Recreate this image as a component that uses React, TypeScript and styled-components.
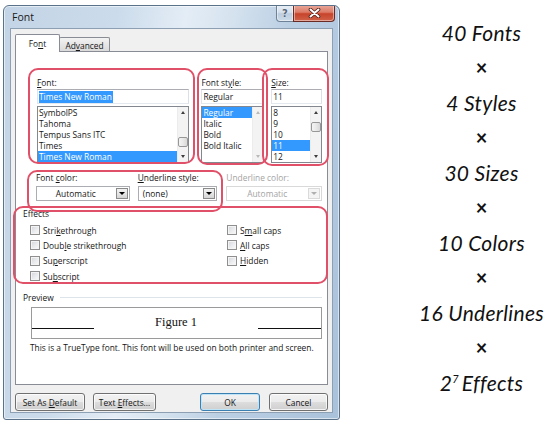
import React from "react";
import styled, { createGlobalStyle } from "styled-components";

const GlobalStyle = createGlobalStyle`
  html, body { margin: 0; padding: 0; background: #ffffff; }
  body {
    width: 549px;
    height: 429px;
    overflow: hidden;
    font-family: "Open Sans", "Noto Sans", sans-serif;
  }
  * { box-sizing: border-box; }
`;

const Page = styled.div`
  display: flex;
  align-items: flex-start;
  width: 549px;
  height: 429px;
`;

/* ---------- window frame ---------- */

const Window = styled.div`
  margin: 5px 0 0 3px;
  width: 337px;
  height: 415px;
  border: 1px solid #5b728b;
  border-radius: 6px 6px 3px 3px;
  background: linear-gradient(100deg, #c3d4e6 0%, #cbdbeb 28%, #e4edf6 45%, #d6e3ef 56%, #bcd0e4 70%, #a9c1da 100%);
  box-shadow: inset 0 0 0 1px rgba(255, 255, 255, 0.55);
  display: flex;
  flex-direction: column;
  overflow: hidden;
`;

const TitleBar = styled.div`
  height: 22px;
  display: flex;
  align-items: flex-start;
  padding: 0 4px 0 8px;
`;

const Title = styled.div`
  margin-top: 5px;
  font-size: 10.5px;
  line-height: 12px;
  color: #1a1a1a;
`;

const CaptionButtons = styled.div`
  margin-left: auto;
  margin-top: -1px;
  display: flex;
`;

const CaptionButton = styled.div<{ $variant: "help" | "close" }>`
  height: 17px;
  width: ${(p) => (p.$variant === "close" ? 42 : 18)}px;
  margin-left: ${(p) => (p.$variant === "close" ? -1 : 0)}px;
  display: flex;
  align-items: center;
  justify-content: center;
  border: 1px solid ${(p) => (p.$variant === "close" ? "#6a2b24" : "#6f8297")};
  border-top: none;
  border-radius: ${(p) => (p.$variant === "close" ? "0 0 4px 0" : "0 0 0 4px")};
  background: ${(p) =>
    p.$variant === "close"
      ? "linear-gradient(180deg, #e9a99b 0%, #dc7b68 45%, #c7432b 55%, #d0634a 100%)"
      : "linear-gradient(180deg, #e9eff6 0%, #d5e0ec 45%, #bccde0 55%, #cddbe9 100%)"};
  box-shadow: inset 0 0 0 1px rgba(255, 255, 255, 0.45);
  font-family: "DejaVu Sans", sans-serif;
  font-weight: 700;
  font-size: 10px;
  color: #56667a;
  text-shadow: 0 0 1px #ffffff;
`;

const Client = styled.div`
  flex: 1;
  margin: 0 6px 6px;
  background: #f0f0f0;
  border: 1px solid #8c9fb3;
  padding: 5px 4px 0;
  display: flex;
  flex-direction: column;
  font-size: 8.4px;
  color: #151515;
`;

/* ---------- tabs ---------- */

const TabStrip = styled.div`
  height: 17px;
  display: flex;
  align-items: flex-end;
  position: relative;
  z-index: 1;
`;

const Tab = styled.div<{ $active?: boolean; $w: number }>`
  width: ${(p) => p.$w}px;
  height: ${(p) => (p.$active ? 18 : 14)}px;
  margin-bottom: ${(p) => (p.$active ? -1 : 0)}px;
  margin-left: ${(p) => (p.$active ? 0 : -1)}px;
  border: 1px solid #898c95;
  border-bottom: none;
  border-radius: 2px 2px 0 0;
  background: ${(p) => (p.$active ? "#ffffff" : "linear-gradient(180deg, #f3f3f3 0%, #e6e6e6 50%, #dadada 100%)")};
  display: flex;
  align-items: center;
  justify-content: center;
  padding-top: ${(p) => (p.$active ? 0 : 1)}px;
`;

const U = styled.span`
  text-decoration: underline;
  text-underline-offset: 1px;
`;

const Panel = styled.div`
  position: relative;
  width: 313px;
  height: 334px;
  background: #ffffff;
  border: 1px solid #898c95;
  padding: 24px 5px 0 7px;
  display: flex;
  flex-direction: column;
`;

/* ---------- font pickers ---------- */

const PickerRow = styled.div`
  margin-left: 14px;
  display: flex;
`;

const Field = styled.div<{ $w: number; $gap?: number }>`
  width: ${(p) => p.$w}px;
  margin-left: ${(p) => p.$gap ?? 0}px;
  display: flex;
  flex-direction: column;
`;

const FieldLabel = styled.div<{ $disabled?: boolean }>`
  height: 13px;
  line-height: 13px;
  white-space: nowrap;
  color: ${(p) => (p.$disabled ? "#a3a3a3" : "#151515")};
`;

const TextBox = styled.div`
  height: 15px;
  border: 1px solid #abadb3;
  border-left-color: #e2e3ea;
  border-right-color: #dbdfe6;
  border-bottom-color: #e3e9ef;
  background: #ffffff;
  padding: 0 0 0 1px;
  display: flex;
  align-items: center;
  white-space: nowrap;
`;

const Highlight = styled.span`
  background: #3399ff;
  color: #ffffff;
  line-height: 12px;
  padding-right: 1px;
`;

const ListBox = styled.div`
  margin-top: 2px;
  height: 57px;
  border: 1px solid #828790;
  background: #ffffff;
  display: flex;
  overflow: hidden;
`;

const ListItems = styled.div`
  flex: 1;
  min-width: 0;
`;

const ListItem = styled.div<{ $selected?: boolean }>`
  height: 11px;
  line-height: 11px;
  padding-left: 1px;
  white-space: nowrap;
  background: ${(p) => (p.$selected ? "#3399ff" : "transparent")};
  color: ${(p) => (p.$selected ? "#ffffff" : "#151515")};
`;

const Scroll = styled.div`
  width: 11px;
  display: flex;
  flex-direction: column;
  background: #f3f3f3;
  border-left: 1px solid #ececec;
`;

const ScrollArrow = styled.div<{ $dir: "up" | "down"; $disabled?: boolean }>`
  height: 11px;
  display: flex;
  align-items: center;
  justify-content: center;
  &::after {
    content: "";
    border-left: 2.5px solid transparent;
    border-right: 2.5px solid transparent;
    ${(p) => (p.$dir === "up" ? "border-bottom" : "border-top")}: 3px solid
      ${(p) => (p.$disabled ? "#b9b9b9" : "#3d3d3d")};
  }
`;

const ScrollTrack = styled.div`
  flex: 1;
  display: flex;
  flex-direction: column;
  align-items: center;
`;

const Thumb = styled.div<{ $top: number }>`
  margin-top: ${(p) => p.$top}px;
  width: 10px;
  height: 10px;
  border: 1px solid #979797;
  border-radius: 2px;
  background: linear-gradient(90deg, #f4f4f4 0%, #e9e9e9 50%, #d8d8d8 100%);
`;

function VScroll({ thumb, disabled }: { thumb?: number; disabled?: boolean }) {
  return (
    <Scroll>
      <ScrollArrow $dir="up" $disabled={disabled} />
      <ScrollTrack>{thumb !== undefined && <Thumb $top={thumb} />}</ScrollTrack>
      <ScrollArrow $dir="down" $disabled={disabled} />
    </Scroll>
  );
}

/* ---------- combo boxes ---------- */

const ColorRow = styled.div`
  margin: 8px 0 0 13px;
  display: flex;
`;

const Combo = styled.div<{ $disabled?: boolean }>`
  margin-top: 2px;
  height: 15px;
  border: 1px solid ${(p) => (p.$disabled ? "#d9d9d9" : "#abadb3")};
  background: #ffffff;
  display: flex;
  align-items: stretch;
  color: ${(p) => (p.$disabled ? "#a3a3a3" : "#151515")};
`;

const ComboText = styled.div<{ $align: "left" | "center" }>`
  flex: 1;
  display: flex;
  align-items: center;
  justify-content: ${(p) => (p.$align === "center" ? "center" : "flex-start")};
  padding-left: ${(p) => (p.$align === "center" ? 0 : 4)}px;
  white-space: nowrap;
`;

const ComboArrow = styled.div<{ $disabled?: boolean }>`
  width: 12px;
  margin: 1px;
  border: 1px solid ${(p) => (p.$disabled ? "#dadada" : "#8a8a8a")};
  background: ${(p) =>
    p.$disabled ? "#f4f4f4" : "linear-gradient(180deg, #f2f2f2 0%, #e6e6e6 50%, #d4d4d4 100%)"};
  display: flex;
  align-items: center;
  justify-content: center;
  &::after {
    content: "";
    border-left: 3px solid transparent;
    border-right: 3px solid transparent;
    border-top: 3px solid ${(p) => (p.$disabled ? "#b0b0b0" : "#000000")};
  }
`;

/* ---------- effects ---------- */

const GroupLabel = styled.div<{ $top: number }>`
  margin-top: ${(p) => p.$top}px;
  height: 13px;
  line-height: 13px;
  display: flex;
  align-items: center;
`;

const GroupRule = styled.div`
  flex: 1;
  height: 1px;
  margin-left: 6px;
  background: #dde4ea;
`;

const CheckGrid = styled.div`
  margin: 2.5px 0 0 7px;
  display: grid;
  grid-template-columns: 197px 1fr;
  grid-template-rows: repeat(4, 15.33px);
  grid-auto-flow: column;
`;

const CheckItem = styled.div`
  display: flex;
  align-items: center;
  white-space: nowrap;
`;

const CheckBox = styled.div`
  width: 10px;
  height: 10px;
  margin-right: 3px;
  border: 1px solid #8f8f8f;
  background: linear-gradient(135deg, #d2d4d8 0%, #e9eaec 50%, #fbfbfb 100%);
  box-shadow: inset 0 0 0 1px #f4f4f4;
`;

/* ---------- preview ---------- */

const PreviewBox = styled.div`
  margin: 3px 0 0 8px;
  width: 291px;
  height: 32px;
  border: 1px solid #9a9a9a;
  display: flex;
  align-items: center;
`;

const PreviewLine = styled.div<{ $w: number }>`
  width: ${(p) => p.$w}px;
  height: 1px;
  margin-top: 11px;
  background: #111111;
`;

const PreviewText = styled.div`
  flex: 1;
  text-align: center;
  font-family: "Liberation Serif", "Times New Roman", serif;
  font-size: 12.5px;
  color: #111111;
`;

const Caption = styled.div`
  margin: 3px 0 0 7px;
  height: 12px;
  line-height: 12px;
  white-space: nowrap;
`;

/* ---------- buttons ---------- */

const ButtonRow = styled.div`
  margin-top: 8px;
  display: flex;
`;

const Button = styled.div<{ $w: number; $gap: number | "auto"; $default?: boolean }>`
  width: ${(p) => p.$w}px;
  height: 18px;
  margin-left: ${(p) => (p.$gap === "auto" ? "auto" : `${p.$gap}px`)};
  border: 1px solid ${(p) => (p.$default ? "#3c7fb1" : "#707070")};
  border-radius: 3px;
  background: linear-gradient(180deg, #f2f2f2 0%, #ebebeb 50%, #dddddd 51%, #cfcfcf 100%);
  box-shadow: inset 0 0 0 1px ${(p) => (p.$default ? "#bfe3f7" : "rgba(255,255,255,0.75)")};
  display: flex;
  align-items: center;
  justify-content: center;
`;

const ButtonLabel = styled.span`
  white-space: pre;
`;

/* ---------- annotations ---------- */

const Mark = styled.div<{ $x: number; $y: number; $w: number; $h: number }>`
  position: absolute;
  left: ${(p) => p.$x}px;
  top: ${(p) => p.$y}px;
  width: ${(p) => p.$w}px;
  height: ${(p) => p.$h}px;
  border: 2.5px solid #e05068;
  border-radius: 10px;
  pointer-events: none;
`;

/* ---------- right-hand formula ---------- */

const Formula = styled.div`
  margin-left: 74px;
  width: 135px;
  padding-top: 14.5px;
  display: flex;
  flex-direction: column;
  align-items: center;
  font-family: Lato, "Open Sans", sans-serif;
  font-style: italic;
  font-size: 21px;
  color: #111111;
`;

const Term = styled.div`
  height: 35.1px;
  line-height: 35.1px;
  white-space: nowrap;
  letter-spacing: 0.3px;
`;

const Times = styled.div`
  height: 35.1px;
  line-height: 35.1px;
  font-style: normal;
  font-weight: 700;
  font-size: 20px;
`;

const Sup = styled.span`
  font-size: 11px;
  vertical-align: 8px;
  line-height: 0;
  margin-right: 3px;
`;

const fonts = ["SymbolPS", "Tahoma", "Tempus Sans ITC", "Times", "Times New Roman"];
const styles = ["Regular", "Italic", "Bold", "Bold Italic"];
const sizes = ["8", "9", "10", "11", "12"];

function CloseGlyph() {
  return (
    <svg width="13" height="10" viewBox="0 0 13 10">
      <path d="M2.5 1.5 L10.5 8.5 M10.5 1.5 L2.5 8.5" stroke="#4a1a14" strokeWidth="3.6" strokeLinecap="round" />
      <path d="M2.5 1.5 L10.5 8.5 M10.5 1.5 L2.5 8.5" stroke="#ffffff" strokeWidth="2" strokeLinecap="round" />
    </svg>
  );
}

export default function App() {
  return (
    <Page>
      <GlobalStyle />
      <Window>
        <TitleBar>
          <Title>Font</Title>
          <CaptionButtons>
            <CaptionButton $variant="help">?</CaptionButton>
            <CaptionButton $variant="close">
              <CloseGlyph />
            </CaptionButton>
          </CaptionButtons>
        </TitleBar>
        <Client>
          <TabStrip>
            <Tab $active $w={45}>
              Fo<U>n</U>t
            </Tab>
            <Tab $w={51}>
              Ad<U>v</U>anced
            </Tab>
          </TabStrip>
          <Panel>
            <PickerRow>
              <Field $w={153}>
                <FieldLabel>
                  <U>F</U>ont:
                </FieldLabel>
                <TextBox>
                  <Highlight>Times New Roman</Highlight>
                </TextBox>
                <ListBox>
                  <ListItems>
                    {fonts.map((f, i) => (
                      <ListItem key={f} $selected={i === fonts.length - 1}>
                        {f}
                      </ListItem>
                    ))}
                  </ListItems>
                  <VScroll thumb={19} />
                </ListBox>
              </Field>
              <Field $w={63} $gap={12}>
                <FieldLabel>
                  Font st<U>y</U>le:
                </FieldLabel>
                <TextBox>Regular</TextBox>
                <ListBox>
                  <ListItems>
                    {styles.map((s, i) => (
                      <ListItem key={s} $selected={i === 0}>
                        {s}
                      </ListItem>
                    ))}
                  </ListItems>
                  <VScroll disabled />
                </ListBox>
              </Field>
              <Field $w={51} $gap={7}>
                <FieldLabel>
                  <U>S</U>ize:
                </FieldLabel>
                <TextBox>11</TextBox>
                <ListBox>
                  <ListItems>
                    {sizes.map((s) => (
                      <ListItem key={s} $selected={s === "11"}>
                        {s}
                      </ListItem>
                    ))}
                  </ListItems>
                  <VScroll thumb={4} />
                </ListBox>
              </Field>
            </PickerRow>

            <ColorRow>
              <Field $w={94}>
                <FieldLabel>
                  Font <U>c</U>olor:
                </FieldLabel>
                <Combo>
                  <ComboText $align="center">Automatic</ComboText>
                  <ComboArrow />
                </Combo>
              </Field>
              <Field $w={80} $gap={8}>
                <FieldLabel>
                  <U>U</U>nderline style:
                </FieldLabel>
                <Combo>
                  <ComboText $align="left">(none)</ComboText>
                  <ComboArrow />
                </Combo>
              </Field>
              <Field $w={96} $gap={9}>
                <FieldLabel $disabled>Underline color:</FieldLabel>
                <Combo $disabled>
                  <ComboText $align="center">Automatic</ComboText>
                  <ComboArrow $disabled />
                </Combo>
              </Field>
            </ColorRow>

            <GroupLabel $top={6}>Effects</GroupLabel>
            <CheckGrid>
              <CheckItem>
                <CheckBox />
                Stri<U>k</U>ethrough
              </CheckItem>
              <CheckItem>
                <CheckBox />
                Doub<U>l</U>e strikethrough
              </CheckItem>
              <CheckItem>
                <CheckBox />
                Su<U>p</U>erscript
              </CheckItem>
              <CheckItem>
                <CheckBox />
                Su<U>b</U>script
              </CheckItem>
              <CheckItem>
                <CheckBox />
                S<U>m</U>all caps
              </CheckItem>
              <CheckItem>
                <CheckBox />
                <U>A</U>ll caps
              </CheckItem>
              <CheckItem>
                <CheckBox />
                <U>H</U>idden
              </CheckItem>
            </CheckGrid>

            <GroupLabel $top={7}>
              Preview
              <GroupRule />
            </GroupLabel>
            <PreviewBox>
              <PreviewLine $w={62} />
              <PreviewText>Figure 1</PreviewText>
              <PreviewLine $w={63} />
            </PreviewBox>
            <Caption>This is a TrueType font. This font will be used on both printer and screen.</Caption>

            <Mark $x={12} $y={16} $w={167} $h={96} />
            <Mark $x={181} $y={16} $w={71} $h={97} />
            <Mark $x={246} $y={16} $w={67} $h={98} />
            <Mark $x={11} $y={118} $w={196} $h={42} />
            <Mark $x={-3} $y={154} $w={315} $h={78} />
          </Panel>
          <ButtonRow>
            <Button $w={70} $gap={0}>
              <ButtonLabel>
                Set As <U>D</U>efault
              </ButtonLabel>
            </Button>
            <Button $w={63} $gap={8}>
              <ButtonLabel>
                Text <U>E</U>ffects...
              </ButtonLabel>
            </Button>
            <Button $w={60} $gap="auto" $default>
              <ButtonLabel>OK</ButtonLabel>
            </Button>
            <Button $w={59} $gap={9}>
              <ButtonLabel>Cancel</ButtonLabel>
            </Button>
          </ButtonRow>
        </Client>
      </Window>

      <Formula>
        <Term>40 Fonts</Term>
        <Times>×</Times>
        <Term>4 Styles</Term>
        <Times>×</Times>
        <Term>30 Sizes</Term>
        <Times>×</Times>
        <Term>10 Colors</Term>
        <Times>×</Times>
        <Term>16 Underlines</Term>
        <Times>×</Times>
        <Term>
          2<Sup>7</Sup>Effects
        </Term>
      </Formula>
    </Page>
  );
}
